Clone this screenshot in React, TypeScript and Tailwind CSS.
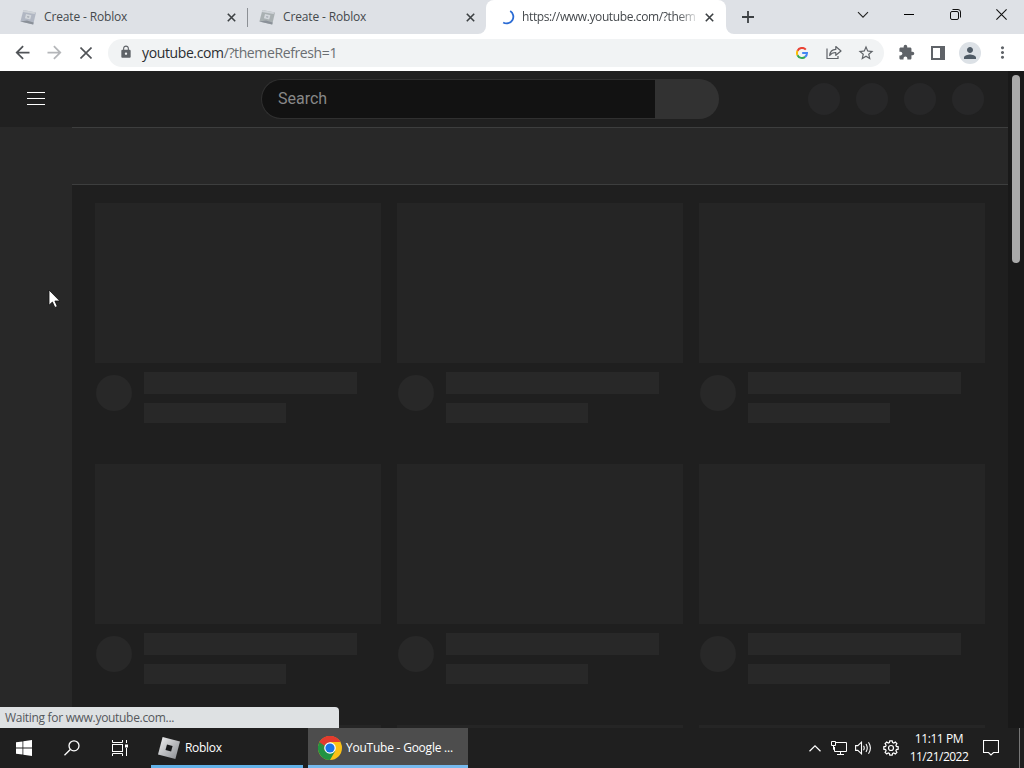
import type { ReactNode } from "react";
import {
  MdArrowBack,
  MdArrowForward,
  MdExtension,
  MdLock,
  MdMoreVert,
  MdPerson,
  MdStarBorder,
} from "react-icons/md";

function Cell({ children, className = "" }: { children?: ReactNode; className?: string }) {
  return <div className={`flex w-8 shrink-0 items-center justify-center ${className}`}>{children}</div>;
}

function CloseX() {
  return (
    <svg width="9" height="9" viewBox="0 0 9 9" className="shrink-0">
      <path d="M0.8 0.8L8.2 8.2M8.2 0.8L0.8 8.2" stroke="#3c4043" strokeWidth="1.6" />
    </svg>
  );
}

function StudioIcon({ tint }: { tint: string }) {
  return (
    <svg width="16" height="16" viewBox="0 0 16 16" className="shrink-0">
      <path d="M3.4 1L16 3.4L13.2 15.4L0.4 12.4z" fill={tint} />
      <path d="M3.4 1L16 3.4L14.4 5L2.9 3z" fill="#cfd3d8" />
      <path d="M0.4 12.4L13.2 15.4L13.6 13.6L7 11.4z" fill="#8a9098" />
      <path d="M6 5L11.4 6.2L10.2 10.4L4.9 9.2z" fill="#d3d7dc" />
      <path d="M7.4 6.9L9.4 7.4L9 8.8L7 8.3z" fill="#a4aab2" />
    </svg>
  );
}

function GoogleG() {
  return (
    <svg width="12" height="12" viewBox="0 0 12 12" fill="none" strokeWidth="2">
      <path d="M9.8 2.6A5 5 0 0 0 1.5 3.8" stroke="#ea4335" />
      <path d="M1.5 3.8A5 5 0 0 0 1.5 8.2" stroke="#fbbc05" />
      <path d="M1.5 8.2A5 5 0 0 0 9.1 9.9" stroke="#34a853" />
      <path d="M9.1 9.9A5 5 0 0 0 11 6H6.2" stroke="#4285f4" />
    </svg>
  );
}

function TabStrip() {
  return (
    <div className="flex h-[34px] shrink-0 bg-white text-[12px] tracking-[-0.15px] text-[#45494d]">
      <div className="flex w-[486px] rounded-br-lg bg-[#dee1e6]">
        <div className="flex w-[247px] items-center pl-5">
          <StudioIcon tint="#b1b7c3" />
          <span className="ml-2 flex-1 whitespace-nowrap">Create - Roblox</span>
          <span className="mr-[11px]">
            <CloseX />
          </span>
        </div>
        <div className="mt-2 h-[19px] w-px bg-[#8c9095]" />
        <div className="flex w-[238px] items-center pl-[11px]">
          <StudioIcon tint="#a9b0b2" />
          <span className="ml-2 flex-1 whitespace-nowrap">Create - Roblox</span>
          <span className="mr-[11px]">
            <CloseX />
          </span>
        </div>
      </div>
      <div className="w-[240px] bg-linear-to-b from-[#dee1e6] from-50% to-white to-50%">
        <div className="flex h-full items-center rounded-t-lg bg-white pl-[14px]">
          <svg width="16" height="16" viewBox="0 0 16 16" className="shrink-0">
            <path d="M10.2 2.1A6 6 0 0 1 3.2 13.4" fill="none" stroke="#2a6bd4" strokeWidth="1.8" />
          </svg>
          <span className="ml-[6px] w-[178px] tracking-[-0.38px] whitespace-nowrap [mask-image:linear-gradient(to_right,black_155px,transparent_178px)]">
            https://www.youtube.com/?them
          </span>
          <span className="ml-[5px]">
            <CloseX />
          </span>
        </div>
      </div>
      <div className="flex flex-1 rounded-bl-lg bg-[#dee1e6]">
        <div className="flex w-11 items-center justify-center">
          <svg width="12" height="12" viewBox="0 0 12 12">
            <path d="M6 0V12M0 6H12" stroke="#3c4043" strokeWidth="1.8" />
          </svg>
        </div>
        <div className="ml-auto flex h-[29px]">
          <div className="flex w-[46px] items-center justify-center">
            <svg width="12" height="8" viewBox="0 0 12 8">
              <path d="M1 1.2L6 6.2L11 1.2" fill="none" stroke="#222" strokeWidth="1.1" />
            </svg>
          </div>
          <div className="flex w-[46px] items-center justify-center">
            <div className="h-px w-[10px] bg-black" />
          </div>
          <div className="flex w-[46px] items-center justify-center">
            <svg width="11" height="11" viewBox="0 0 11 11" fill="none" stroke="#111">
              <rect x="0.5" y="2.5" width="8" height="8" rx="1.5" />
              <path d="M2.5 0.5H8Q10.5 0.5 10.5 3V8.5" />
            </svg>
          </div>
          <div className="flex w-[46px] items-center justify-center">
            <svg width="11" height="11" viewBox="0 0 11 11">
              <path d="M0.4 0.4L10.6 10.6M10.6 0.4L0.4 10.6" stroke="#111" strokeWidth="1.1" />
            </svg>
          </div>
        </div>
      </div>
    </div>
  );
}

function Toolbar() {
  return (
    <div className="flex h-[37px] shrink-0 items-center bg-white pl-[6px] text-[#5f6368]">
      <Cell>
        <MdArrowBack size={21} color="#505357" />
      </Cell>
      <Cell>
        <MdArrowForward size={21} color="#b4b6b9" />
      </Cell>
      <Cell>
        <svg width="12" height="12" viewBox="0 0 12 12">
          <path d="M0.5 0.5L11.5 11.5M11.5 0.5L0.5 11.5" stroke="#505357" strokeWidth="1.6" />
        </svg>
      </Cell>
      <div className="ml-[6px] flex h-7 w-[776px] items-center rounded-full bg-[#f1f3f4] pl-[2px]">
        <Cell>
          <MdLock size={14} className="mb-px" />
        </Cell>
        <div className="mb-px flex-1 text-[14px] tracking-[-0.38px] text-[#6a6e72]">
          <span className="text-[#2b2e31]">youtube.com</span>/?themeRefresh=1
        </div>
        <Cell>
          <GoogleG />
        </Cell>
        <Cell>
          <svg width="16" height="15" viewBox="0 0 16 15" fill="none" stroke="#5f6368" strokeWidth="1.2">
            <path d="M1 3.5V13.5H12V11" />
            <path d="M3.7 10.5C4 6.5 6 4.6 9.8 4.4V1.5L15 6L9.8 10.3V7.5C7 7.4 5.2 8.4 3.7 10.5z" strokeLinejoin="round" />
          </svg>
        </Cell>
        <Cell className="mr-[2px]">
          <MdStarBorder size={18} />
        </Cell>
      </div>
      <div className="ml-[6px] flex">
        <Cell>
          <MdExtension size={17} />
        </Cell>
        <Cell>
          <svg width="14" height="14" viewBox="0 0 14 14">
            <rect x="1" y="1" width="12" height="12" fill="none" stroke="#5f6368" strokeWidth="2" />
            <rect x="9" width="5" height="14" fill="#5f6368" />
          </svg>
        </Cell>
        <Cell>
          <div className="flex size-[22px] items-center justify-center rounded-full bg-[#dce1e6]">
            <MdPerson size={18} color="#4f5b66" />
          </div>
        </Cell>
        <Cell>
          <MdMoreVert size={19} />
        </Cell>
      </div>
    </div>
  );
}

function VideoSkeleton() {
  return (
    <div className="h-[261px]">
      <div className="h-40 bg-[#252525]" />
      <div className="flex pt-[9px] pl-px">
        <div className="mt-[3px] size-9 rounded-full bg-[#282828]" />
        <div className="ml-3">
          <div className="h-[22px] w-[213px] bg-[#282828]" />
          <div className="mt-[9px] h-5 w-[142px] bg-[#282828]" />
        </div>
      </div>
    </div>
  );
}

function Page() {
  return (
    <div className="flex h-[657px] shrink-0 overflow-hidden">
      <div className="flex w-[1008px] flex-col bg-[#1f1f1f]">
        <div className="flex h-14 shrink-0 items-center bg-[#202020] pl-[27px]">
          <div className="mb-[2px] flex w-[18px] flex-col gap-[5px]">
            <div className="h-px bg-white" />
            <div className="h-px bg-white" />
            <div className="h-px bg-white" />
          </div>
          <div className="ml-[216px] flex h-10 w-[458px]">
            <div className="flex w-[394px] items-center rounded-l-full border border-r-0 border-[#303030] bg-[#121212] pl-4 font-[Roboto,sans-serif] text-[16px] text-[#888888]">
              Search
            </div>
            <div className="flex-1 rounded-r-full bg-[#323232]" />
          </div>
          <div className="ml-[89px] flex gap-4">
            <div className="size-8 rounded-full bg-[#272728]" />
            <div className="size-8 rounded-full bg-[#272728]" />
            <div className="size-8 rounded-full bg-[#272728]" />
            <div className="size-8 rounded-full bg-[#272728]" />
          </div>
        </div>
        <div className="flex flex-1">
          <div className="w-[72px] bg-[#282828]" />
          <div className="flex-1">
            <div className="h-[58px] border-y border-[#3d3e3e] bg-[#282828]" />
            <div className="grid h-[543px] grid-cols-[286px_286px_286px] content-start gap-x-4 overflow-hidden pt-[18px] pl-[23px]">
              {Array.from({ length: 9 }, (_, i) => (
                <VideoSkeleton key={i} />
              ))}
            </div>
          </div>
        </div>
      </div>
      <div className="w-4 bg-[#191919] pt-1 pl-1">
        <div className="h-[188px] w-2 rounded-full bg-[#a9a9a9]" />
      </div>
    </div>
  );
}

function ChromeLogo() {
  return (
    <svg width="24" height="24" viewBox="0 0 24 24" className="shrink-0">
      <circle cx="12" cy="12" r="12" fill="#fbc116" />
      <path d="M12 12L1.6 6A12 12 0 0 0 12 24L17.2 15z" fill="#229342" />
      <path d="M1.6 6A12 12 0 0 1 22.4 6H12L6.8 15z" fill="#e33b2e" />
      <path d="M1.6 6L6.8 15L10 12L8 7z" fill="#229342" />
      <path d="M1.6 6A12 12 0 0 1 22.4 6H12A6 6 0 0 0 6.5 10z" fill="#e33b2e" />
      <circle cx="12" cy="12" r="5.8" fill="#fff" />
      <circle cx="12" cy="12" r="4.6" fill="#1a73e8" />
    </svg>
  );
}

function Taskbar() {
  return (
    <div className="flex h-10 shrink-0 bg-[#1f1f1f] text-[12px] text-white">
      <div className="flex w-12 items-center justify-center">
        <svg width="16" height="16" viewBox="0 0 16 16" fill="#fff">
          <path d="M0 2.3L6.5 1.4V7.5H0zM7.3 1.3L16 0V7.5H7.3zM0 8.4H6.5V14.6L0 13.7zM7.3 8.4H16V16L7.3 14.7z" />
        </svg>
      </div>
      <div className="flex w-12 items-center justify-center">
        <svg width="16" height="16" viewBox="0 0 16 16" fill="none" stroke="#fff" strokeWidth="1.3">
          <circle cx="10" cy="5.8" r="5" />
          <path d="M6.3 9.5L0.5 15.3" />
        </svg>
      </div>
      <div className="flex w-12 items-center justify-center">
        <svg width="16" height="16" viewBox="0 0 16 16" fill="none" stroke="#fff">
          <path d="M0.5 0V2.5H10.5V0M0.5 16V13.5H10.5V16M14.5 0V3M14.5 8V16" />
          <rect x="0.5" y="4.5" width="10" height="7" />
          <rect x="13" y="4.5" width="3" height="3" fill="#fff" stroke="none" />
        </svg>
      </div>
      <div className="ml-[7px] flex w-[152px] items-center border-b-[3px] border-[#62b1e8] pt-[3px] pl-[7px]">
        <svg width="22" height="22" viewBox="0 0 22 22" className="shrink-0">
          <defs>
            <linearGradient id="robloxMetal" x1="0" y1="0" x2="1" y2="1">
              <stop offset="0" stopColor="#f3f3f4" />
              <stop offset="1" stopColor="#85888d" />
            </linearGradient>
          </defs>
          <path d="M4.6 0L22 4.6L17.4 22L0 17.4z" fill="url(#robloxMetal)" />
          <path d="M9 7.4L14.6 8.9L13.1 14.5L7.5 13z" fill="#17181a" />
        </svg>
        <span className="ml-[5px] tracking-[-0.3px]">Roblox</span>
      </div>
      <div className="ml-[5px] flex w-40 items-center border-b-[3px] border-[#76b9ed] bg-[#4d4d4d] pt-[3px] pl-[10px]">
        <ChromeLogo />
        <span className="ml-1 tracking-[-0.23px] whitespace-nowrap">YouTube - Google ...</span>
      </div>
      <div className="ml-auto flex items-center">
        <div className="flex w-6 justify-center">
          <svg width="12" height="7" viewBox="0 0 12 7">
            <path d="M0.5 6.3L6 0.9L11.5 6.3" fill="none" stroke="#fff" strokeWidth="1.2" />
          </svg>
        </div>
        <div className="flex w-6 justify-center pr-px">
          <svg width="17" height="14" viewBox="0 0 17 14" fill="none" stroke="#fff">
            <path d="M6 1.5H16.5V10.5H4.5V6M10.5 10.5V13.5M7 13.5H14" />
            <path d="M1.5 0.5H5.5V4.5H1.5zM3.5 4.5V8.5H5" />
          </svg>
        </div>
        <div className="flex w-6 justify-center">
          <svg width="17" height="14" viewBox="0 0 17 14" fill="none" stroke="#fff" strokeWidth="1.1">
            <path d="M0.6 4.6H2.8L6.5 1.2V12.8L2.8 9.4H0.6z" />
            <path d="M8.5 4.8Q10 7 8.5 9.2M11 3Q13.5 7 11 11M13.5 1.2Q17.3 7 13.5 12.8" />
          </svg>
        </div>
        <div className="flex w-8 justify-center">
          <svg width="16" height="16" viewBox="0 0 16 16" fill="none" stroke="#fff" strokeWidth="1.2">
            <path d="M6.8 0.8H9.2L9.6 2.6L10.8 3.1L12.3 2.1L13.9 3.7L12.9 5.2L13.4 6.4L15.2 6.8V9.2L13.4 9.6L12.9 10.8L13.9 12.3L12.3 13.9L10.8 12.9L9.6 13.4L9.2 15.2H6.8L6.4 13.4L5.2 12.9L3.7 13.9L2.1 12.3L3.1 10.8L2.6 9.6L0.8 9.2V6.8L2.6 6.4L3.1 5.2L2.1 3.7L3.7 2.1L5.2 3.1L6.4 2.6z" />
            <circle cx="8" cy="8" r="2.5" />
          </svg>
        </div>
        <div className="w-16 text-center leading-[18px] whitespace-nowrap">
          <div className="tracking-[-0.4px]">11:11 PM</div>
          <div className="tracking-[-0.5px]">11/21/2022</div>
        </div>
        <div className="flex w-10 justify-center">
          <svg width="16" height="16" viewBox="0 0 16 16" fill="none" stroke="#fff">
            <path d="M0.5 0.5H15.5V12.5H10.5L8 15L5.5 12.5H0.5z" strokeWidth="1.1" />
          </svg>
        </div>
        <div className="mr-1 ml-2 h-10 w-px bg-[#777777]" />
      </div>
    </div>
  );
}

export default function App() {
  return (
    <div className="relative flex h-[768px] w-[1024px] flex-col overflow-hidden font-['Open_Sans','Noto_Sans',sans-serif]">
      <TabStrip />
      <Toolbar />
      <Page />
      <Taskbar />
      <div className="absolute top-[707px] left-0 flex h-[21px] w-[339px] items-center rounded-tr bg-[#dee1e3] pl-[5px] text-[12px] tracking-[-0.31px] text-[#55585c]">
        Waiting for www.youtube.com...
      </div>
      <svg className="absolute top-[289px] left-12" width="13" height="20" viewBox="0 0 13 20">
        <path
          d="M1 1V16.2L4.4 13L6.9 18.5L9.3 17.4L6.9 12H11.8z"
          fill="#fff"
          stroke="#111"
          strokeWidth="0.8"
        />
      </svg>
    </div>
  );
}
